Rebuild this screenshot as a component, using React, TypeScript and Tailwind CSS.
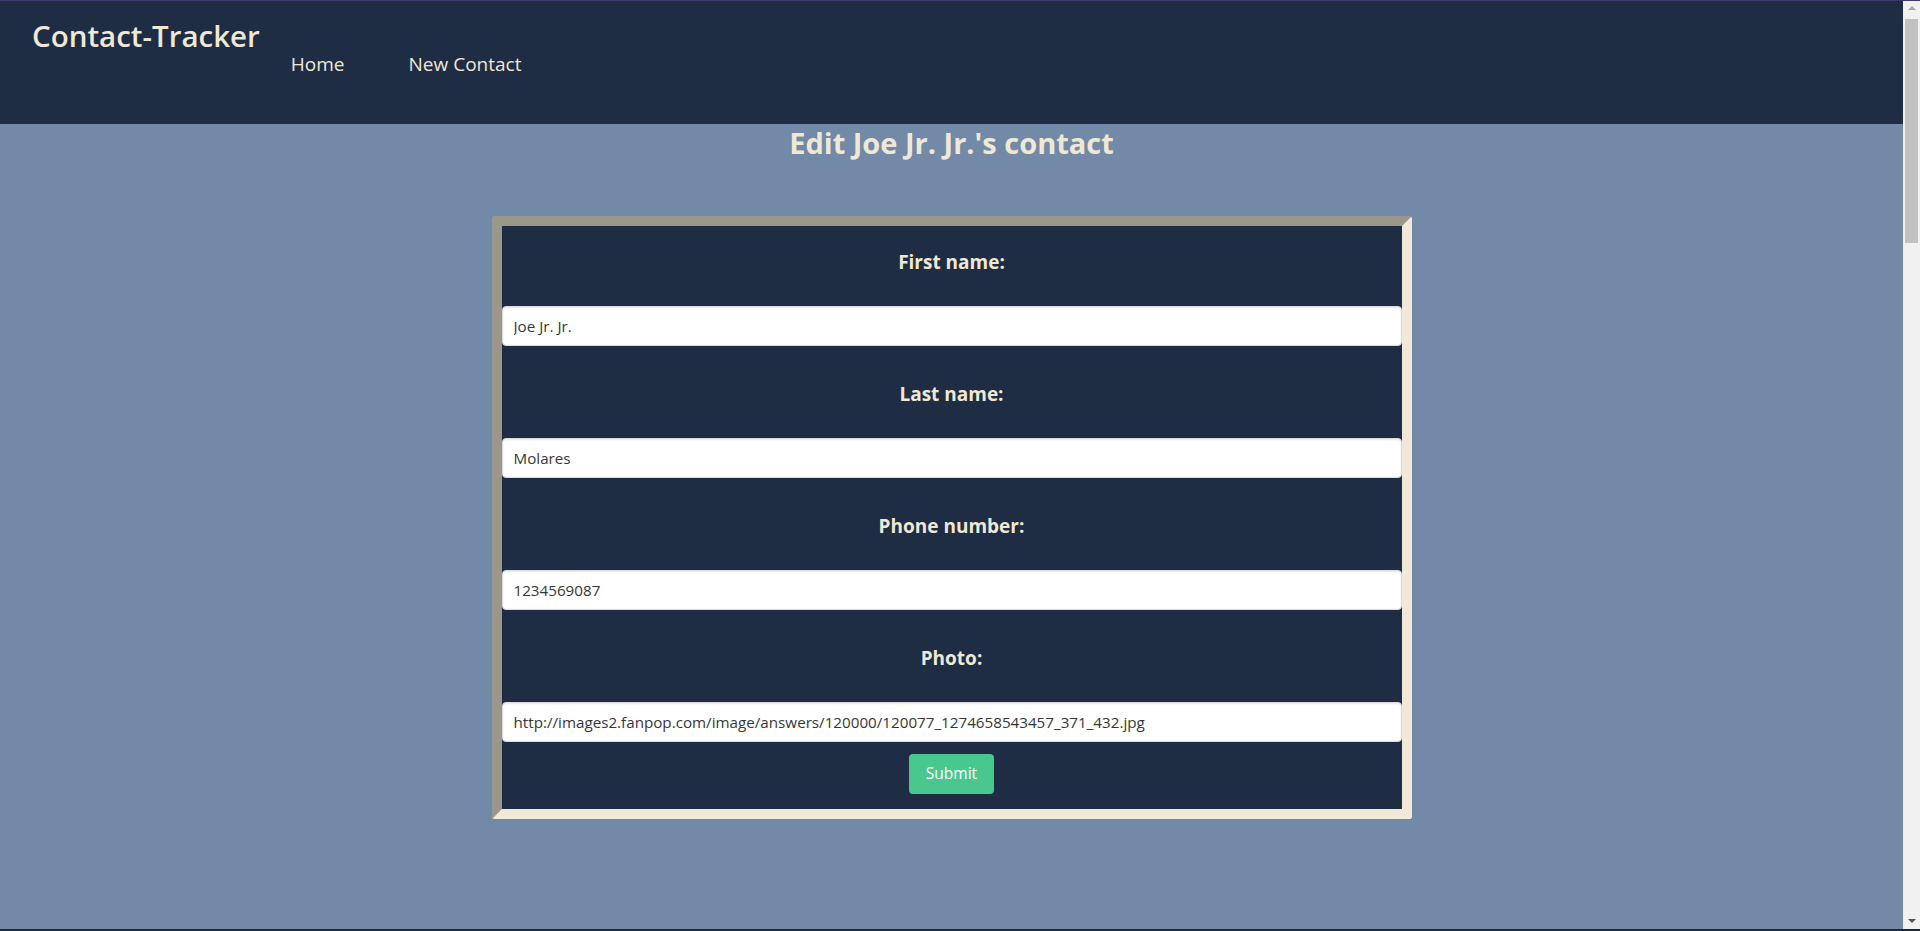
import { useState } from "react"

const fields = [
  { id: "first", label: "First name:", value: "Joe Jr. Jr." },
  { id: "last", label: "Last name:", value: "Molares" },
  { id: "phone", label: "Phone number:", value: "1234569087" },
  { id: "photo", label: "Photo:", value: "http://images2.fanpop.com/image/answers/120000/120077_1274658543457_371_432.jpg" },
]

function Navbar() {
  return (
    <header className="flex h-[123px] shrink-0 items-start bg-[#1e2c44] text-[#efe8d4]">
      <h1 className="ml-[32px] mt-[13px] text-[29.5px] font-semibold leading-[44px]">Contact-Tracker</h1>
      <nav className="ml-[31px] mt-[49px] flex gap-[64px] text-[19px] leading-[28px]">
        <a href="#">Home</a>
        <a href="#">New Contact</a>
      </nav>
    </header>
  )
}

function EditForm() {
  const [values, setValues] = useState(fields.map((f) => f.value))

  return (
    <form
      className="mx-auto w-[920px] rounded-[3px] border-[10px] border-t-[#9b978a] border-l-[#9b978a] border-r-[#f0e9d7] border-b-[#f0e9d7] bg-[#1e2c44]"
      onSubmit={(e) => e.preventDefault()}
    >
      {fields.map((f, i) => (
        <div key={f.id} className="mb-[12px]">
          <label htmlFor={f.id} className="block pt-[24px] pb-[32px] text-center text-[19px] font-bold leading-[24px] text-[#efe8d4]">
            {f.label}
          </label>
          <input
            id={f.id}
            value={values[i]}
            onChange={(e) => setValues(values.map((v, j) => (j === i ? e.target.value : v)))}
            className="block h-[40px] w-full rounded-[4px] border border-[#dbdbdb] bg-white px-[11px] text-[15.2px] text-[#363636] shadow-[inset_0_1px_2px_rgba(10,10,10,0.1)] outline-none"
          />
        </div>
      ))}
      {/* Submit */}
      <div className="flex justify-center pb-[15px]">
        <button type="submit" className="h-[40px] rounded-[4px] bg-[#48c78e] px-[17px] text-[15.5px] text-white">
          Submit
        </button>
      </div>
    </form>
  )
}

function Scrollbar() {
  return (
    <div className="flex w-[17px] shrink-0 flex-col items-center bg-[#f1f1f1]">
      <div className="mt-[5px] h-0 w-0 border-x-[4px] border-b-[4px] border-x-transparent border-b-[#a3a3a3]" />
      <div className="mt-[9px] h-[224px] w-[13px] bg-[#c1c1c1]" />
      <div className="flex-1" />
      <div className="mb-[6px] h-0 w-0 border-x-[4px] border-t-[4px] border-x-transparent border-t-[#505050]" />
    </div>
  )
}

export default function App() {
  return (
    <div className="flex h-screen w-full flex-col overflow-hidden font-['Open_Sans',sans-serif]">
      <div className="h-px shrink-0 bg-[#3d3a6b]" />
      <div className="flex min-h-0 flex-1">
        <div className="flex flex-1 flex-col bg-[#728aa8]">
          <Navbar />
          <main>
            <h2 className="mb-[55px] mt-px text-center text-[29px] font-bold leading-[36px] text-[#efe8d4]">
              Edit Joe Jr. Jr.'s contact
            </h2>
            <EditForm />
          </main>
        </div>
        <Scrollbar />
      </div>
      <div className="h-[2px] shrink-0 bg-[#1c2a3b]" />
    </div>
  )
}
